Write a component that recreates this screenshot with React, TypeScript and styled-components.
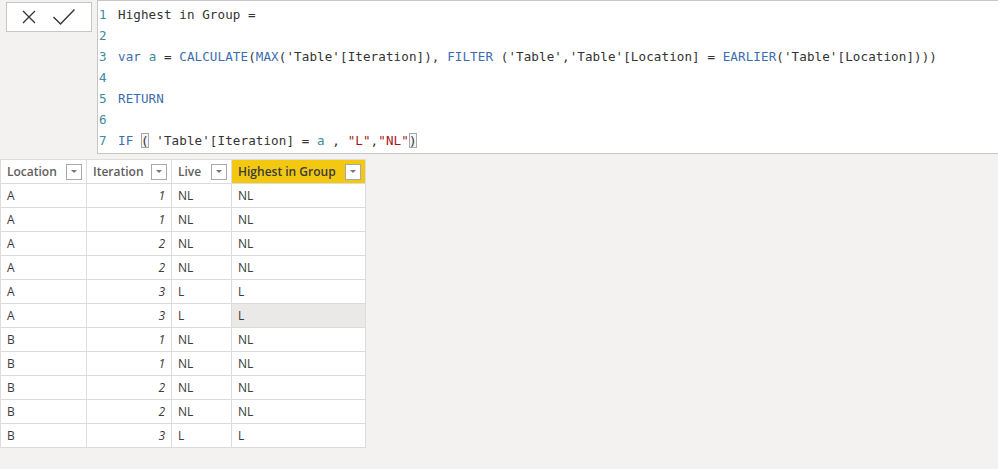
import React from "react";
import styled, { createGlobalStyle } from "styled-components";

const Global = createGlobalStyle`
  html, body { margin: 0; padding: 0; background: #f3f2f1; }
  body { width: 998px; height: 469px; overflow: hidden; }
`;

const Page = styled.div`
  display: flex;
  flex-direction: column;
  width: 998px;
  height: 469px;
  background: #f3f2f1;
`;

const TopBar = styled.div`
  display: flex;
  align-items: flex-start;
  height: 154px;
`;

const ActionBox = styled.div`
  margin: 2px 0 0 6px;
  width: 86px;
  height: 30px;
  box-sizing: border-box;
  background: #ffffff;
  border: 1px solid #c8c6c4;
  display: flex;
  align-items: center;
  justify-content: center;
  gap: 15px;
  padding-right: 2px;
`;

const IconButton = styled.span`
  display: flex;
  align-items: center;
  justify-content: center;
  height: 20px;
`;

const Editor = styled.div`
  margin-left: 5px;
  flex: 1;
  height: 154px;
  box-sizing: border-box;
  background: #ffffff;
  border: 1px solid #c8c6c4;
  border-right: none;
  padding-top: 3px;
  font-family: "DejaVu Sans Mono", "Liberation Mono", monospace;
  font-size: 12.55px;
  letter-spacing: 0.1px;
  color: #333333;
`;

const Line = styled.div`
  height: 21px;
  line-height: 21px;
  white-space: pre;
`;

const LineNo = styled.span`
  display: inline-block;
  width: 19px;
  padding-left: 1px;
  color: #3d8a9e;
`;

const Kw = styled.span`
  color: #3c6db0;
`;
const Var = styled.span`
  color: #3d8a9e;
`;
const Str = styled.span`
  color: #a31515;
`;
const Bracket = styled.span`
  outline: 1px solid #a8a8a8;
  outline-offset: -1px;
  background: #f5f5f5;
`;

const TableWrap = styled.div`
  margin-top: 5px;
`;

const Grid = styled.table`
  border-collapse: collapse;
  background: #ffffff;
  font-family: "Segoe UI", "Open Sans", "Noto Sans", sans-serif;
  font-size: 12px;
  color: #3b3a39;
  table-layout: fixed;
  width: 365px;
`;

const Th = styled.th<{ $active?: boolean; $w: number }>`
  width: ${(p) => p.$w}px;
  height: 24px;
  box-sizing: border-box;
  padding: 0 4px 0 6px;
  text-align: left;
  font-weight: 600;
  color: ${(p) => (p.$active ? "#3b3a39" : "#605e5c")};
  background: ${(p) => (p.$active ? "#f2c811" : "#ffffff")};
  border: 1px solid #dcdcdc;
`;

const HeadInner = styled.div`
  display: flex;
  align-items: center;
  justify-content: space-between;
  white-space: nowrap;
`;

const FilterBtn = styled.span`
  width: 16px;
  height: 16px;
  box-sizing: border-box;
  border: 1px solid #a8a8a8;
  background: #ffffff;
  display: flex;
  align-items: center;
  justify-content: center;
`;

const Td = styled.td<{ $num?: boolean; $sel?: boolean }>`
  height: 24px;
  box-sizing: border-box;
  padding: 0 6px;
  border: 1px solid #dcdcdc;
  text-align: ${(p) => (p.$num ? "right" : "left")};
  font-style: ${(p) => (p.$num ? "italic" : "normal")};
  background: ${(p) => (p.$sel ? "#eae9e8" : "#ffffff")};
  white-space: nowrap;
`;

const rows: [string, number, string, string][] = [
  ["A", 1, "NL", "NL"],
  ["A", 1, "NL", "NL"],
  ["A", 2, "NL", "NL"],
  ["A", 2, "NL", "NL"],
  ["A", 3, "L", "L"],
  ["A", 3, "L", "L"],
  ["B", 1, "NL", "NL"],
  ["B", 1, "NL", "NL"],
  ["B", 2, "NL", "NL"],
  ["B", 2, "NL", "NL"],
  ["B", 3, "L", "L"],
];

const cols = [
  { name: "Location", w: 86 },
  { name: "Iteration", w: 85 },
  { name: "Live", w: 60 },
  { name: "Highest in Group", w: 134, active: true },
];

const Caret = () => (
  <svg width="8" height="5" viewBox="0 0 8 5">
    <path d="M1 1 L7 1 L4 4 Z" fill="#777" />
  </svg>
);

export default function App() {
  return (
    <Page>
      <Global />
      <TopBar>
        <ActionBox>
          <IconButton>
            <svg width="16" height="16" viewBox="0 0 16 16">
              <path d="M2 2 L14 14 M14 2 L2 14" stroke="#333" strokeWidth="1.3" fill="none" />
            </svg>
          </IconButton>
          <IconButton>
            <svg width="24" height="18" viewBox="0 0 24 18">
              <path d="M1.5 9 L8.5 16 L22.5 1.5" stroke="#333" strokeWidth="1.4" fill="none" />
            </svg>
          </IconButton>
        </ActionBox>
        <Editor>
          <Line>
            <LineNo>1</LineNo>Highest in Group =
          </Line>
          <Line>
            <LineNo>2</LineNo>
          </Line>
          <Line>
            <LineNo>3</LineNo>
            <Kw>var</Kw>{" "}<Var>a</Var>{" = "}<Kw>CALCULATE</Kw>(<Kw>MAX</Kw>('Table'[Iteration]),{" "}
            <Kw>FILTER</Kw>{" ('Table','Table'[Location] = "}<Kw>EARLIER</Kw>('Table'[Location])))
          </Line>
          <Line>
            <LineNo>4</LineNo>
          </Line>
          <Line>
            <LineNo>5</LineNo>
            <Kw>RETURN</Kw>
          </Line>
          <Line>
            <LineNo>6</LineNo>
          </Line>
          <Line>
            <LineNo>7</LineNo>
            <Kw>IF</Kw>{" "}<Bracket>(</Bracket>{" 'Table'[Iteration] = "}<Var>a</Var>{" , "}<Str>"L"</Str>,<Str>"NL"</Str>
            <Bracket>)</Bracket>
          </Line>
        </Editor>
      </TopBar>
      <TableWrap>
        <Grid>
          <thead>
            <tr>
              {cols.map((c) => (
                <Th key={c.name} $w={c.w} $active={c.active}>
                  <HeadInner>
                    <span>{c.name}</span>
                    <FilterBtn>
                      <Caret />
                    </FilterBtn>
                  </HeadInner>
                </Th>
              ))}
            </tr>
          </thead>
          <tbody>
            {rows.map((r, i) => (
              <tr key={i}>
                <Td>{r[0]}</Td>
                <Td $num>{r[1]}</Td>
                <Td>{r[2]}</Td>
                <Td $sel={i === 5}>{r[3]}</Td>
              </tr>
            ))}
          </tbody>
        </Grid>
      </TableWrap>
    </Page>
  );
}
